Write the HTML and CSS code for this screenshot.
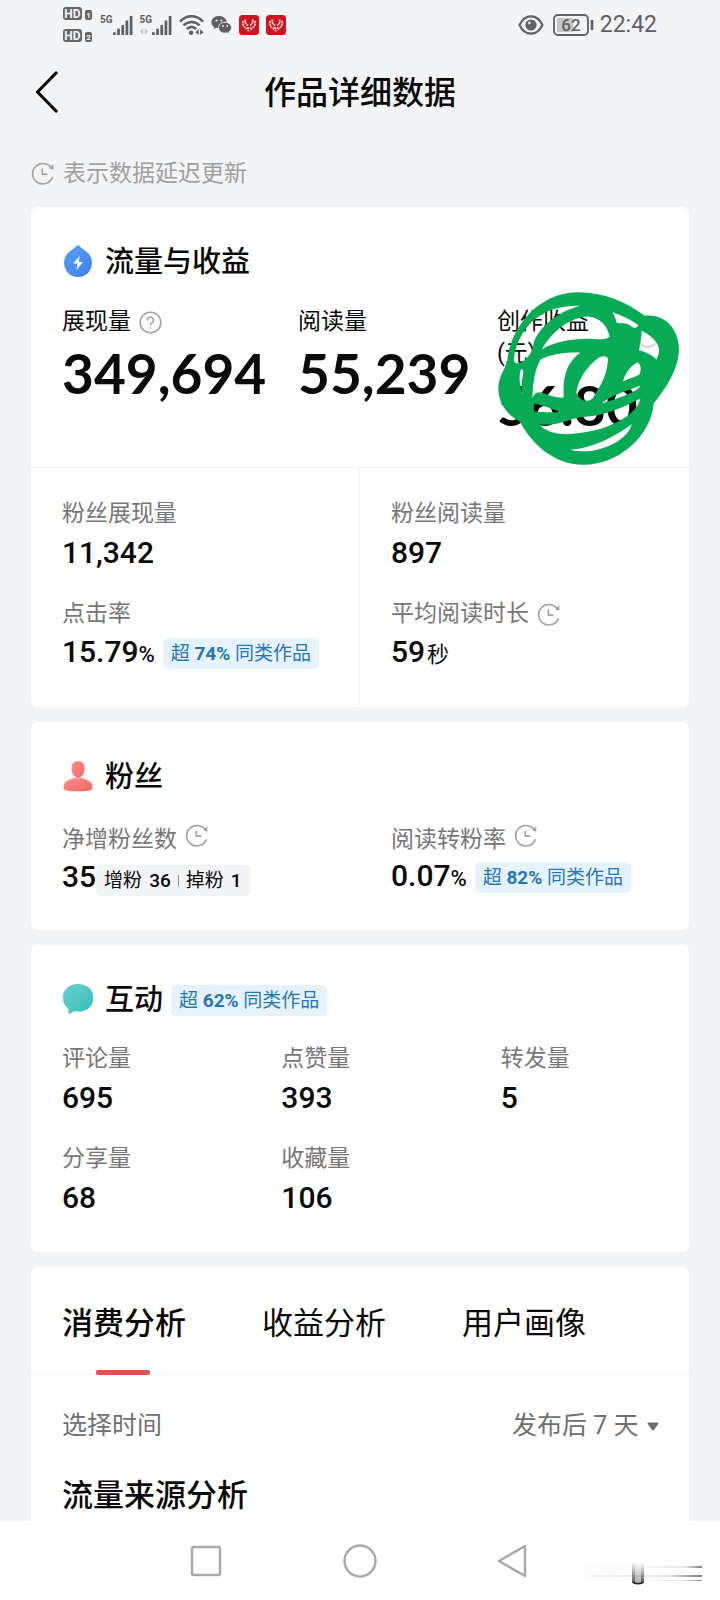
FILE: index.html
```html
<!DOCTYPE html>
<html lang="zh-CN">
<head>
<meta charset="utf-8">
<meta name="viewport" content="width=device-width, initial-scale=1">
<title>作品详细数据</title>
<link rel="stylesheet" href="styles.css">
</head>
<body>
<svg class="defs" width="0" height="0" aria-hidden="true">
  <symbol id="clock" viewBox="0 0 24 24">
    <g fill="none" stroke="currentColor" stroke-width="1.700" stroke-linecap="round" stroke-linejoin="round">
      <path d="M21.200 6.200A10.700 10.700 0 1 0 22.200 16.500"/>
      <path d="M11.800 7.400v5.300h4.600"/>
    </g>
    <path d="M23.300 2v6l-4.300-1.600z" fill="currentColor"/>
  </symbol>
  <symbol id="help" viewBox="0 0 24 24">
    <g fill="none" stroke="currentColor" stroke-width="1.600" stroke-linecap="round">
      <circle cx="12" cy="12" r="10.800"/>
      <path d="M8.800 9.300a3.200 3.200 0 1 1 5 2.900c-1.200.8-1.800 1.300-1.800 2.500"/>
      <path d="M12 17.600v.3"/>
    </g>
  </symbol>
  <symbol id="signal" viewBox="0 0 22 21">
    <path d="M0 18h3v3H0zM4.600 14h3v7h-3zM9.200 10h3v11h-3zM13.800 5h3v16h-3zM18.400 0h3v21h-3z" fill="currentColor"/>
  </symbol>
  <symbol id="redapp" viewBox="0 0 20 20">
    <rect width="20" height="20" rx="3.500" fill="#cf1322"/>
    <g fill="none" stroke="#ffdfe0" stroke-width="1.700" stroke-dasharray="2 .7">
      <path d="M4 6c-.8 3 .4 6 4.200 8M16 6c.8 3-.4 6-4.200 8"/>
      <path d="M6.500 4.500c-.8 2.500 0 4.500 2.500 6M13.500 4.500c.8 2.500 0 4.500-2.500 6"/>
      <path d="M8 13h4M8.500 15.500h3"/>
    </g>
  </symbol>
</svg>

<div class="statusbar">
  <div class="status-left">
    <svg class="hd" viewBox="0 0 30 36">
      <g fill="#666">
        <rect x="0" y="0" width="19" height="13" rx="3"/>
        <rect x="0" y="22" width="19" height="13" rx="3"/>
        <rect x="22" y="3" width="7" height="10" rx="2"/>
        <rect x="22" y="25" width="7" height="10" rx="2"/>
      </g>
      <g fill="#f3f4f6" font-family="Roboto, sans-serif" font-weight="700" text-anchor="middle">
        <text x="9.500" y="10.500" font-size="12">HD</text>
        <text x="9.500" y="32.500" font-size="12">HD</text>
        <text x="25.500" y="11" font-size="8">1</text>
        <text x="25.500" y="33" font-size="8">2</text>
      </g>
    </svg>
    <div class="cell"><span class="cell-type">5G</span><svg class="bars"><use href="#signal"/></svg></div>
    <div class="cell"><span class="cell-type">5G<svg class="updown" viewBox="0 0 10 8"><path d="M0 4l4-4v8zM6 0l4 4-4 4z" fill="#c4c4c6"/></svg></span><svg class="bars"><use href="#signal"/></svg></div>
    <svg class="wifi" viewBox="0 0 26 22">
      <g fill="none" stroke="currentColor" stroke-width="2.600">
        <path d="M1 7.500C8 0 18 0 25 7.500"/>
        <path d="M4.600 11.500c5-5 12-5 16.800 0"/>
        <path d="M8.200 15.200c3-2.800 6.600-2.800 9.600 0"/>
      </g>
      <circle cx="12.500" cy="19" r="2.300" fill="currentColor"/>
      <path d="M17 18.500l3.500-3v6zM22 15.500l3.500 3-3.500 3z" fill="currentColor"/>
    </svg>
    <svg class="wechat" viewBox="0 0 21 20">
      <path d="M8 1C3.600 1 .4 3.700.4 7.200c0 2 1 3.600 2.700 4.800L2.400 14l2.700-1.300c.9.300 1.900.4 2.900.4 4.300 0 7.700-2.600 7.700-6S12.300 1 8 1z" fill="currentColor"/>
      <path d="M14 7.200c-3.600 0-6.500 2.400-6.500 5.500s2.900 5.500 6.500 5.500c.8 0 1.600-.1 2.300-.4l2.300 1.300-.6-2c1.500-1 2.500-2.600 2.500-4.400 0-3.100-2.900-5.500-6.500-5.500z" fill="currentColor" stroke="#f3f4f6"/>
      <g fill="#f3f4f6"><circle cx="5.500" cy="5.500" r="1"/><circle cx="10.300" cy="5.500" r="1"/><circle cx="12" cy="11" r=".9"/><circle cx="16.200" cy="11" r=".9"/></g>
    </svg>
    <svg class="app"><use href="#redapp"/></svg>
    <svg class="app"><use href="#redapp"/></svg>
  </div>
  <div class="status-right">
    <svg class="eye" viewBox="0 0 26 20">
      <path d="M1.500 10C7-1.500 19-1.500 24.500 10 19 21.500 7 21.500 1.500 10z" fill="none" stroke="currentColor" stroke-width="2.200"/>
      <circle cx="13" cy="10" r="5.600" fill="currentColor"/>
      <circle cx="11.400" cy="7.800" r="1.600" fill="#c6c7c9"/>
    </svg>
    <svg class="battery" viewBox="0 0 41 22">
      <rect x="4" y="4" width="16" height="14" fill="#c4c5c7"/>
      <rect x="1" y="1" width="34" height="20" rx="4" fill="none" stroke="currentColor" stroke-width="1.800"/>
      <path d="M39 6v10" stroke="currentColor" stroke-width="2.600"/>
      <text x="18" y="17" text-anchor="middle" font-family="Roboto, sans-serif" font-size="17" font-weight="500" fill="currentColor">62</text>
    </svg>
    <span class="time">22:42</span>
  </div>
</div>

<header class="header">
  <button class="back" type="button" aria-label="返回">
    <svg viewBox="0 0 24 42"><path d="M21 2L2.500 21 21 40" fill="none" stroke="#0a0a0a" stroke-width="3.200" stroke-linecap="round" stroke-linejoin="round"/></svg>
  </button>
  <h1 class="title">作品详细数据</h1>
</header>

<main class="main">
  <p class="note"><svg class="icon"><use href="#clock"/></svg>表示数据延迟更新</p>

  <section class="card">
    <h2 class="heading">
      <svg class="heading-icon" viewBox="0 0 31 34">
        <defs><linearGradient id="blue" x1="0" y1="0" x2="1" y2="1"><stop offset="0" stop-color="#5a9ff5"/><stop offset="1" stop-color="#3f7fee"/></linearGradient></defs>
        <path d="M16 .5c1 0 1.600.5 2.300 1.300C20 4 23 5.200 25.500 7.500A14 14 0 0 1 30 17.500C30 26 23.800 32 16 32S2 26 2 17.500a14 14 0 0 1 4.500-10C9 5.200 12 4 13.700 1.800 14.400 1 15 .5 16 .5z" fill="url(#blue)"/>
        <path d="M17.600 11l-6.400 7.500h4.200L14.600 25l6.300-8h-4.200z" fill="#fff"/>
      </svg>
      流量与收益
    </h2>
    <div class="hero">
      <div>
        <div class="hero-label">展现量<svg class="icon"><use href="#help"/></svg></div>
        <div class="hero-value">349,694</div>
      </div>
      <div>
        <div class="hero-label">阅读量</div>
        <div class="hero-value">55,239</div>
      </div>
      <div class="income">
        <div class="hero-label">创作收益<br>(元)</div>
        <div class="hero-value">56.80</div>
        <svg class="scribble" viewBox="75 60 555 530" aria-hidden="true">
          <path d="M508 220C518 233 540 233 554 220" fill="none" stroke="#b9a2a2" stroke-width="3"/>
          <path fill="#07ab55" fill-rule="evenodd" d="M82 355C83 320 100 300 109 275C112 190 190 67 320 66C400 66 465 95 522 137C580 130 622 175 624 235C624 300 580 360 548 400C540 500 440 585 335 584C250 584 180 520 147 455C110 435 82 400 82 355Z
          M128 270C140 175 205 105 327 107C260 125 205 170 188 218C184 240 180 255 160 270C148 280 132 285 128 270Z
          M213 238C240 185 300 140 350 139C390 142 410 170 416 200C400 212 380 206 345 206C300 207 245 216 213 238Z
          M424 126C460 138 490 155 503 165C498 172 490 178 478 166C465 156 445 162 437 158C435 148 430 136 424 126Z
          M512 182C535 192 560 215 564 235C565 250 560 262 556 268C545 255 525 245 504 240C508 220 512 200 512 182Z
          M209 268C240 250 290 246 328 247C285 280 275 320 278 382C255 385 225 370 205 366C192 366 188 375 184 385C186 340 190 300 209 268Z
          M384 262C400 255 415 258 410 275C408 320 385 350 365 385C345 400 325 390 316 368C320 330 350 285 384 262Z
          M500 276C512 285 510 300 506 312C490 322 470 325 456 334C462 310 475 290 500 276Z
          M150 298C158 294 158 310 154 325C151 340 151 350 155 372C145 345 143 315 150 298Z
          M191 400C215 405 245 417 268 425C245 428 215 426 190 424C188 412 188 404 191 400Z
          M205 463C270 470 300 440 345 440C410 435 470 405 508 385C500 430 420 485 290 492C245 492 220 480 205 463Z
          M392 400C420 375 470 362 508 346C500 366 440 385 392 400Z
          M298 539C370 532 430 500 482 462C470 515 370 558 298 539Z"/>
        </svg>
      </div>
    </div>
    <div class="split split-lined">
      <div class="stack">
        <div class="stat"><div class="label">粉丝展现量</div><div class="value">11,342</div></div>
        <div class="stat"><div class="label">点击率</div><div class="value"><span>15.79<small class="unit">%</small></span><span class="badge">超 <b>74%</b> 同类作品</span></div></div>
      </div>
      <div class="stack">
        <div class="stat"><div class="label">粉丝阅读量</div><div class="value">897</div></div>
        <div class="stat"><div class="label">平均阅读时长<svg class="icon"><use href="#clock"/></svg></div><div class="value"><span>59<small class="unit unit-cjk">秒</small></span></div></div>
      </div>
    </div>
  </section>

  <section class="card">
    <h2 class="heading">
      <svg class="heading-icon" viewBox="0 0 31 34">
        <defs><linearGradient id="red" x1="0" y1="0" x2="1" y2="1"><stop offset="0" stop-color="#ff9088"/><stop offset="1" stop-color="#f06767"/></linearGradient></defs>
        <path d="M16 1c4 0 6.600 3 6.600 7.500 0 4.200-2.700 9.500-6.600 9.500S9.500 12.700 9.500 8.500C9.500 4 12 1 16 1z" fill="url(#red)"/>
        <path d="M1.500 27c0-4 2.500-6 6-7.300 2.500-1 4.500-1.400 6-1.700 1.500.8 3.500.8 5 0 1.500.3 3.500.7 6 1.700 3.500 1.300 6 3.300 6 7.300 0 2.500-1.500 3.300-4 3.700-6 .8-15 .8-21 0-2.500-.4-4-1.200-4-3.700z" fill="url(#red)"/>
      </svg>
      粉丝
    </h2>
    <div class="split split-compact">
      <div class="stat">
        <div class="label">净增粉丝数<svg class="icon icon-raised"><use href="#clock"/></svg></div>
        <div class="value"><span>35</span><span class="detail">增粉 <b>36</b><i class="bar"></i>掉粉 <b>1</b></span></div>
      </div>
      <div class="stat">
        <div class="label">阅读转粉率<svg class="icon icon-raised"><use href="#clock"/></svg></div>
        <div class="value"><span>0.07<small class="unit">%</small></span><span class="badge">超 <b>82%</b> 同类作品</span></div>
      </div>
    </div>
  </section>

  <section class="card">
    <h2 class="heading">
      <svg class="heading-icon" viewBox="0 0 31 34">
        <defs><linearGradient id="teal" x1="0" y1="0" x2="1" y2="1"><stop offset="0" stop-color="#6ad2cc"/><stop offset="1" stop-color="#35bdbb"/></linearGradient></defs>
        <path d="M16 1c9 0 15.500 6 15.500 13.500C31.500 23 25 28.500 16 28.500c-1.500 0-2.500-.1-3.800-.4-1.500 1.500-3.400 2.300-5 2.500-1 .1-1.200-.6-.8-1.400.6-1.200.4-2.700-.4-3.700C2.500 22.500.8 19 .8 14.500.8 7 7 1 16 1z" fill="url(#teal)"/>
      </svg>
      互动<span class="badge">超 <b>62%</b> 同类作品</span>
    </h2>
    <div class="thirds">
      <div class="stat"><div class="label">评论量</div><div class="value">695</div></div>
      <div class="stat"><div class="label">点赞量</div><div class="value">393</div></div>
      <div class="stat"><div class="label">转发量</div><div class="value">5</div></div>
      <div class="stat"><div class="label">分享量</div><div class="value">68</div></div>
      <div class="stat"><div class="label">收藏量</div><div class="value">106</div></div>
    </div>
  </section>

  <section class="card card-last">
    <div class="tabs" role="tablist">
      <button class="tab tab-active" type="button" role="tab" aria-selected="true">消费分析</button>
      <button class="tab" type="button" role="tab" aria-selected="false">收益分析</button>
      <button class="tab" type="button" role="tab" aria-selected="false">用户画像</button>
    </div>
    <div class="range">
      <label for="period">选择时间</label>
      <span class="picker">
        <select id="period"><option>发布后 7 天</option></select>
        <svg class="caret" viewBox="0 0 12 9"><path d="M1.500.5h9c1 0 1.300.8.700 1.500L7 7.800c-.6.800-1.400.8-2 0L.8 2C.2 1.300.5.5 1.500.5z" fill="#6b6b6b"/></svg>
      </span>
    </div>
    <h3 class="subheading">流量来源分析</h3>
  </section>
</main>

<nav class="navbar">
  <button type="button" aria-label="最近任务"><svg viewBox="0 0 34 34"><rect x="3" y="3" width="28" height="28" rx="2"/></svg></button>
  <button type="button" aria-label="主页"><svg viewBox="0 0 34 34"><circle cx="17" cy="17" r="15.500"/></svg></button>
  <button type="button" aria-label="返回"><svg viewBox="0 0 34 34"><path d="M28 2v30L2 17z"/></svg></button>
  <svg class="smudge" viewBox="0 0 120 26" aria-hidden="true">
    <defs>
      <linearGradient id="fade"><stop offset="0" stop-color="#000" stop-opacity=".03"/><stop offset=".7" stop-color="#000" stop-opacity=".1"/><stop offset="1" stop-color="#000" stop-opacity=".5"/></linearGradient>
      <linearGradient id="drop" x2="0" y2="1"><stop offset="0" stop-color="#000" stop-opacity="0"/><stop offset="1" stop-color="#000" stop-opacity=".65"/></linearGradient>
    </defs>
    <rect x="0" y="2" width="54" height="20" fill="#000" opacity=".012"/>
    <rect x="60" y="6" width="58" height="2" fill="url(#fade)"/>
    <rect x="5" y="15" width="113" height="2" fill="url(#fade)"/>
    <rect x="60" y="20" width="58" height="1" fill="url(#fade)"/>
    <rect x="48" y="2" width="3" height="21" fill="url(#drop)"/>
    <rect x="51" y="2" width="6" height="22" fill="url(#drop)" opacity=".5"/>
    <rect x="57" y="2" width="3" height="21" fill="url(#drop)"/>
    <path d="M49 22.500q5 2.500 10 0" fill="none" stroke="#222" stroke-width="1.500"/>
  </svg>
</nav>
</body>
</html>
```

FILE: styles.css
```css
* {
  box-sizing: border-box;
}

body {
  margin: 0;
  min-height: 100vh;
  display: flex;
  flex-direction: column;
  background: #f3f4f6;
  color: #0a0a0a;
  font-family: Roboto, "Noto Sans CJK SC", sans-serif;
  font-size: 23px;
}

h1, h2, h3, p {
  margin: 0;
}

button, select {
  margin: 0;
  padding: 0;
  border: 0;
  background: none;
  color: inherit;
  font: inherit;
}

svg {
  display: block;
  flex: none;
}

.defs {
  position: absolute;
}

/* Status bar */
.statusbar {
  display: flex;
  justify-content: space-between;
  height: 50px;
  padding: 0 63px;
  color: #5f6062;
}

.status-left, .status-right {
  display: flex;
  align-items: center;
}

.status-left {
  gap: 7px;
}

.status-right {
  gap: 6px;
}

.hd {
  width: 30px;
  height: 36px;
}

.cell {
  display: flex;
  height: 21px;
}

.cell-type {
  font-size: 10px;
  line-height: 10px;
  font-weight: 700;
}

.updown {
  width: 8px;
  height: 7px;
  margin-top: 3px;
}

.bars {
  width: 20px;
  height: 21px;
}

.wifi {
  width: 25px;
  height: 22px;
}

.wechat {
  width: 21px;
  height: 20px;
}

.app {
  width: 20px;
  height: 20px;
}

.eye {
  width: 26px;
  height: 20px;
  margin-right: 3px;
}

.battery {
  width: 41px;
  height: 22px;
}

.time {
  font-size: 23px;
  line-height: 30px;
}

/* Page header */
.header {
  display: grid;
  grid-template-columns: 48px 1fr 48px;
  align-items: center;
  height: 84px;
  padding: 0 31px;
}

.back {
  padding-left: 4px;
}

.back svg {
  width: 24px;
  height: 42px;
}

.title {
  padding-top: 2px;
  font-size: 32px;
  line-height: 48px;
  font-weight: 500;
  text-align: center;
}

.main {
  flex: 1;
  display: flex;
  flex-direction: column;
  gap: 15px;
  padding: 0 31px;
}

.icon {
  width: 23px;
  height: 23px;
  color: #a3a3a3;
}

.icon-raised {
  margin-bottom: 10px;
}

.note {
  display: flex;
  align-items: center;
  gap: 9px;
  height: 58px;
  padding-top: 21px;
  line-height: 36px;
  color: #a0a0a0;
}

/* Cards */
.card {
  background: #fff;
  border-radius: 7px;
}

.card-last {
  flex: 1;
  border-radius: 7px 7px 0 0;
}

.heading {
  display: flex;
  align-items: center;
  gap: 12px;
  height: 77px;
  padding: 33px 31px 0;
  font-size: 29px;
  line-height: 44px;
  font-weight: 500;
}

.heading .badge {
  margin-left: -4px;
}

.heading-icon {
  width: 31px;
  height: 34px;
}

.hero {
  display: grid;
  grid-template-columns: 236fr 199fr 161fr;
  padding: 22px 31px 27px;
  border-bottom: 1px solid #f3f3f4;
}

.hero-label {
  display: flex;
  align-items: center;
  gap: 8px;
  line-height: 32px;
}

.income .hero-label {
  display: block;
}

.hero-value {
  font-family: Lato, sans-serif;
  font-size: 55px;
  line-height: 70px;
  font-weight: 700;
}

.income {
  position: relative;
}

.scribble {
  position: absolute;
  top: -16px;
  left: -1px;
  width: 185px;
  height: 177px;
}

.split {
  display: grid;
  grid-template-columns: 1fr 1fr;
}

.split-lined .stack {
  display: grid;
  gap: 22px;
  padding: 29px 31px 32px;
}

.split-lined .stack:first-child {
  border-right: 1px solid #f3f3f4;
}

.split-compact {
  padding: 24px 0 33px;
}

.split-compact .stat {
  padding: 0 0 0 31px;
}

.split-compact .value {
  height: 40px;
  line-height: 40px;
}

.thirds {
  display: grid;
  grid-template-columns: repeat(3, 1fr);
  row-gap: 22px;
  padding: 20px 0 32px;
}

.thirds .stat {
  padding-left: 31px;
}

.label {
  display: flex;
  align-items: center;
  gap: 8px;
  height: 34px;
  line-height: 34px;
  color: #777;
}

.value {
  display: flex;
  align-items: center;
  height: 44px;
  line-height: 44px;
  font-size: 30px;
  font-weight: 500;
  white-space: nowrap;
}

.unit {
  font-size: 22px;
}

.unit-cjk {
  padding-left: 2px;
  font-weight: 400;
}

.badge {
  margin-left: 8px;
  padding: 0 8px;
  border-radius: 5px;
  background: #e6f3fd;
  color: #2577bb;
  font-size: 19px;
  line-height: 31px;
  font-weight: 400;
}

.badge b {
  font-weight: 700;
}

.detail {
  display: flex;
  align-items: center;
  gap: 7px;
  margin-top: 7px;
  padding: 0 9px 0 8px;
  border-radius: 5px;
  background: #f3f4f6;
  font-size: 19px;
  line-height: 31px;
  font-weight: 400;
}

.detail b {
  font-weight: 500;
}

.bar {
  width: 1px;
  height: 11px;
  background: #8a8a8a;
}

/* Analysis */
.tabs {
  display: flex;
  gap: 76px;
  padding: 0 31px;
  border-bottom: 1px solid #f3f3f4;
}

.tab {
  position: relative;
  padding: 34px 0 27px;
  font-size: 31px;
  line-height: 46px;
}

.tab-active {
  font-weight: 500;
}

.tab-active::after {
  content: "";
  position: absolute;
  bottom: -1px;
  left: 50%;
  width: 54px;
  height: 5px;
  margin-left: -28px;
  border-radius: 2px;
  background: #d9534f;
}

.range {
  display: flex;
  align-items: center;
  justify-content: space-between;
  padding: 31px 30px 0 31px;
  font-size: 25px;
  line-height: 40px;
  color: #707070;
}

.picker {
  display: flex;
  align-items: center;
  gap: 8px;
}

.picker select {
  appearance: none;
  height: 40px;
}

.caret {
  width: 12px;
  height: 9px;
}

.subheading {
  padding: 27px 31px 2px;
  font-size: 31px;
  line-height: 46px;
  font-weight: 500;
}

/* System navigation */
.navbar {
  position: relative;
  display: flex;
  justify-content: center;
  align-items: center;
  gap: 120px;
  height: 79px;
  background: #fff;
}

.navbar button svg {
  width: 34px;
  height: 34px;
  fill: none;
  stroke: #aaa;
  stroke-width: 2.500;
  stroke-linejoin: round;
}

.smudge {
  position: absolute;
  right: 16px;
  bottom: 14px;
  width: 120px;
  height: 26px;
}
```
